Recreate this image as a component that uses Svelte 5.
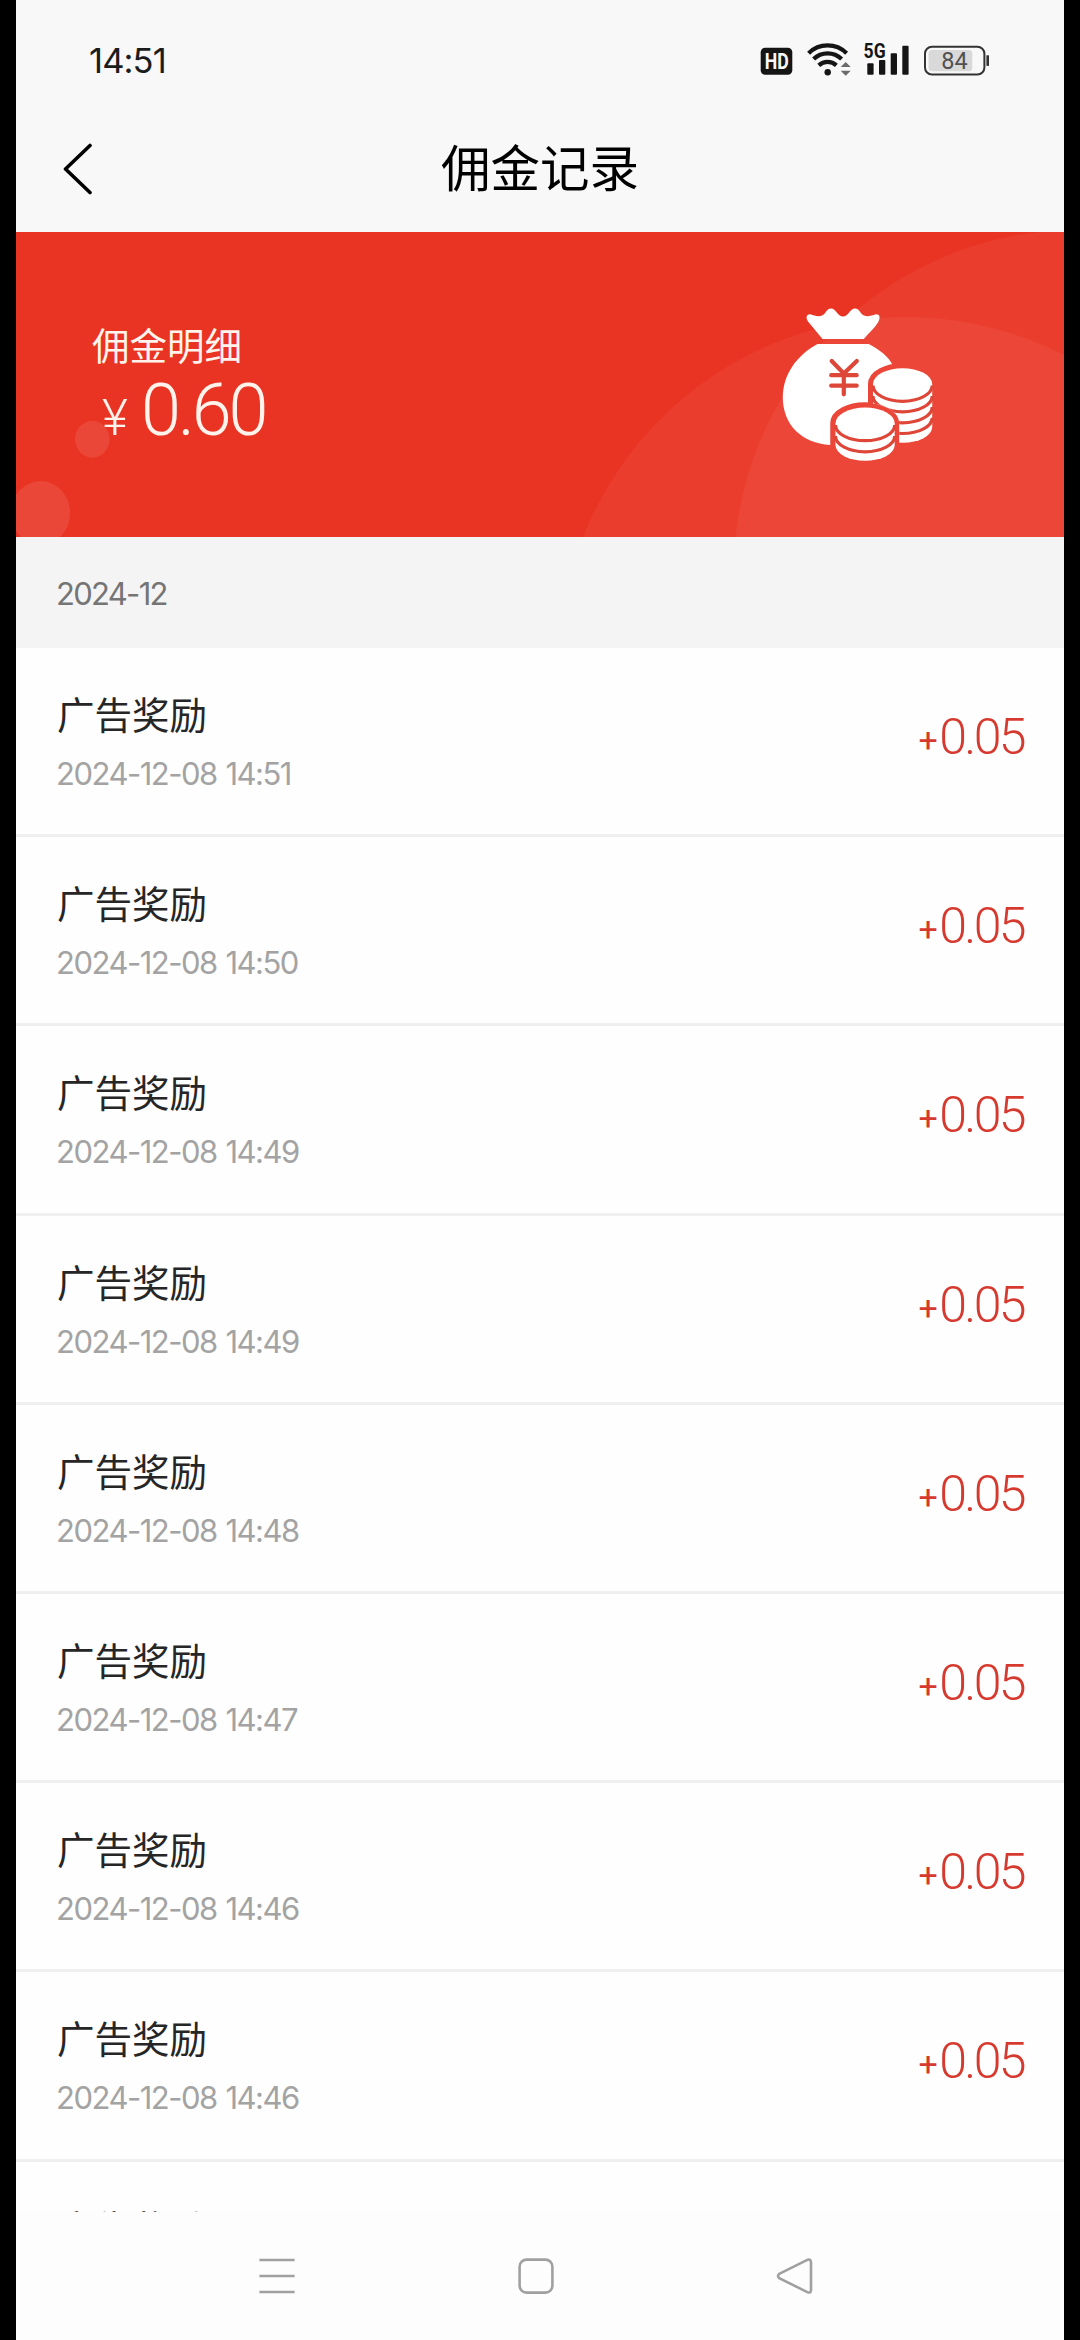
<script>
  const records = ['14:51', '14:50', '14:49', '14:49', '14:48', '14:47', '14:46', '14:46'].map((time) => ({
    title: '广告奖励',
    date: `2024-12-08 ${time}`,
    value: '0.05'
  }));
</script>

<div class="screen">
  <header class="status">
    <span class="clock">14:51</span>
    <svg class="status-icons" viewBox="755 40 240 40" width="240" height="40">
      <rect x="760.7" y="47.7" width="31.6" height="27" rx="4.5" fill="#151515" />
      <text class="hd" x="764.8" y="69" textLength="24" lengthAdjust="spacingAndGlyphs">HD</text>
      <g fill="none" stroke="#151515" stroke-width="4.2">
        <path d="M808.6 53.2A27 27 0 0 1 846.6 53.2" />
        <path d="M813.6 59A20 20 0 0 1 841.6 59" />
        <path d="M818.8 65.4A13 13 0 0 1 836.4 65.4" />
      </g>
      <circle cx="827.7" cy="72.2" r="3.2" fill="#151515" />
      <path d="M840.7 67L845.7 62L850.7 67ZM840.7 70.7L845.7 75.7L850.7 70.7Z" fill="#6a6a6a" />
      <g fill="#151515">
        <rect x="867.3" y="63.3" width="6.3" height="11.4" rx="1" />
        <rect x="879" y="60" width="6.3" height="14.7" rx="1" />
        <rect x="890.7" y="53.3" width="6.3" height="21.4" rx="1" />
        <rect x="902.3" y="45.7" width="6.3" height="29" rx="1" />
      </g>
      <text class="net" x="863.6" y="58" textLength="22" lengthAdjust="spacingAndGlyphs">5G</text>
      <rect x="925" y="46.7" width="59.4" height="27.8" rx="7" fill="none" stroke="#333" stroke-width="2" />
      <rect x="928.5" y="50" width="43.8" height="21.2" rx="3.5" fill="#d9d9d9" />
      <rect x="986.4" y="55.3" width="2.6" height="10.6" fill="#333" />
      <text class="level" x="941.3" y="69.2">84</text>
    </svg>
  </header>

  <div class="navbar">
    <svg class="back" viewBox="0 0 30 52" width="30" height="52">
      <path d="M27 2.5L2.5 26L27 49.5" fill="none" stroke="#000" stroke-width="3.6" stroke-linecap="round" stroke-linejoin="round" />
    </svg>
    <h1>佣金记录</h1>
    <span class="side"></span>
  </div>

  <section class="banner">
    <svg class="art" viewBox="16 232 1048 305" width="1048" height="305">
      <defs>
        <path id="rear" d="M873 384A29.6 15.8 0 0 1 932.2 384V427A29.6 15.8 0 0 1 873 427Z" />
        <path id="front" d="M835.5 423.3A29.6 15.8 0 0 1 894.7 423.3V445A29.6 15.8 0 0 1 835.5 445Z" />
        <mask id="bag-mask" maskUnits="userSpaceOnUse" x="770" y="300" width="180" height="170">
          <rect x="770" y="300" width="180" height="170" fill="#fff" />
          <use href="#rear" stroke="#000" stroke-width="10" />
          <use href="#front" stroke="#000" stroke-width="10.5" />
        </mask>
        <mask id="rear-mask" maskUnits="userSpaceOnUse" x="770" y="300" width="180" height="170">
          <rect x="770" y="300" width="180" height="170" fill="#fff" />
          <use href="#front" stroke="#000" stroke-width="9" />
        </mask>
      </defs>
      <g fill="#fff">
        <circle cx="906" cy="664" r="347" opacity="0.05" />
        <circle cx="1077" cy="573.5" r="343.5" opacity="0.05" />
        <ellipse cx="92.3" cy="439.3" rx="17.2" ry="18.4" opacity="0.1" />
        <ellipse cx="40.6" cy="513" rx="29.5" ry="32" opacity="0.1" />
        <path d="M822.5 339L808 321.5C805.5 317.5 806.5 314 810.5 314.3C814 315.5 818.5 317 822 315.5C826 313.5 826.5 308.4 831 308.4C836 308.4 837.5 316.5 843 316.5C848.5 316.5 850 308.4 855 308.4C859.5 308.4 860 313.5 864 315.5C867.5 317 872 315.5 875.8 314.3C879.8 314 880.8 317.5 878 322.5C874.5 328.5 868.5 333 863.8 339Z" />
        <path mask="url(#bag-mask)" d="M817.5 344H868.7C878.5 349 889 356.5 893 366V445H830C802 443 782.8 425.5 782.8 397C782.8 374.5 797 355 817.5 344Z" />
        <use href="#rear" mask="url(#rear-mask)" />
        <use href="#front" />
      </g>
      <g fill="none" stroke="#de4638" stroke-width="3.2">
        <g mask="url(#rear-mask)">
          <path d="M873 385.5A29.6 15.8 0 0 0 932.2 385.5" />
          <path d="M873 396A29.6 15.8 0 0 0 932.2 396" />
          <path d="M873 407A29.6 15.8 0 0 0 932.2 407" />
          <path d="M873 417.7A29.6 15.8 0 0 0 932.2 417.7" />
        </g>
        <path d="M835.5 424.9A29.6 15.8 0 0 0 894.7 424.9" />
        <path d="M835.5 436A29.6 15.8 0 0 0 894.7 436" />
        <path stroke-width="4.2" stroke-linecap="round" d="M831.7 361L843.8 373.5L856.8 361M843.8 373.5V394.3M831.2 375.2H856.7M831.2 385.7H856.7" />
      </g>
    </svg>
    <div class="summary">
      <div class="label">佣金明细</div>
      <div class="total"><span class="yen">¥</span><span>0.60</span></div>
    </div>
  </section>

  <div class="month">2024-12</div>

  <main>
    {#each records as r}
      <article>
        <div class="info">
          <div class="title">{r.title}</div>
          <div class="date">{r.date}</div>
        </div>
        <div class="amount"><span class="plus">+</span><span>{r.value}</span></div>
      </article>
    {/each}
    <article>
      <div class="title">广告奖励</div>
    </article>
  </main>

  <footer>
    <svg viewBox="0 0 40 40" width="40" height="40"><path d="M2.4 4H37.6M2.4 20H37.6M2.4 36H37.6" /></svg>
    <svg viewBox="0 0 40 40" width="40" height="40"><rect x="3.6" y="3.6" width="32.8" height="33" rx="7" /></svg>
    <svg viewBox="0 0 40 40" width="40" height="40"><path d="M4.2 17.9L32.3 3.9Q36 2.6 36 6.5V34Q36 37.6 32.3 36.1L4.2 22.1Q1.8 20 4.2 17.9Z" /></svg>
  </footer>
</div>

<style>
  :global(body) {
    margin: 0;
    background: #000;
  }

  .screen {
    box-sizing: border-box;
    width: 1080px;
    height: 2340px;
    padding: 0 16px;
    background: #000;
    display: flex;
    flex-direction: column;
    overflow: hidden;
    font-family: Inter, 'Noto Sans CJK SC', sans-serif;
  }

  .status {
    height: 120px;
    flex: none;
    box-sizing: border-box;
    padding: 0 69px 0 73px;
    background: #f8f8f8;
    display: flex;
    align-items: center;
    justify-content: space-between;
  }

  .clock {
    padding-top: 2px;
    font-size: 34.5px;
    line-height: 40px;
    letter-spacing: -0.9px;
    color: #1c1c1c;
  }

  .status-icons {
    display: block;
  }

  .hd {
    font: 700 22px Roboto, sans-serif;
    fill: #f8f8f8;
  }

  .net {
    font: 700 19.5px Roboto, sans-serif;
    fill: #151515;
    stroke: #f8f8f8;
    stroke-width: 2px;
    paint-order: stroke;
  }

  .level {
    font: 400 23.5px Roboto, sans-serif;
    fill: #505050;
  }

  .navbar {
    height: 112px;
    flex: none;
    box-sizing: border-box;
    padding: 0 47px 14px;
    background: #f8f8f8;
    display: flex;
    align-items: center;
    justify-content: space-between;
  }

  .side {
    width: 30px;
  }

  h1 {
    margin: 0;
    padding-bottom: 6px;
    font: 400 49.5px/60px 'Noto Sans CJK SC', sans-serif;
    color: #000;
  }

  .banner {
    height: 305px;
    flex: none;
    background: #e93323;
    position: relative;
    overflow: hidden;
  }

  .art {
    position: absolute;
    inset: 0;
  }

  .summary {
    position: relative;
    padding: 87px 0 0 76px;
    color: #fff3ec;
  }

  .label {
    font: 400 37.5px/50px 'Noto Sans CJK SC', sans-serif;
  }

  .total {
    display: flex;
    align-items: baseline;
    padding-left: 10px;
    margin-top: 2px;
    font: 350 72px/80px Roboto, sans-serif;
    letter-spacing: -3.2px;
  }

  .yen {
    width: 39px;
    font-size: 50px;
    letter-spacing: 0;
  }

  .month {
    height: 111px;
    flex: none;
    box-sizing: border-box;
    padding: 37px 40px 0;
    background: #f4f4f4;
    font-size: 31px;
    line-height: 40px;
    letter-spacing: -1.7px;
    color: #757575;
  }

  main {
    height: 1564px;
    flex: none;
    overflow: hidden;
    background: #fefefe;
  }

  article {
    box-sizing: border-box;
    height: 189.2px;
    padding: 40px 40px 0 41px;
    border-bottom: 3px solid #efefef;
    display: flex;
    justify-content: space-between;
    align-items: flex-start;
  }

  .title {
    font: 400 37.5px/50px 'Noto Sans CJK SC', sans-serif;
    color: #262626;
  }

  .date {
    margin-top: 16px;
    margin-left: -1px;
    font-size: 31px;
    line-height: 40px;
    letter-spacing: -1.5px;
    word-spacing: 1.5px;
    color: #a3a3a3;
  }

  .amount {
    display: flex;
    align-items: baseline;
    margin-top: 19px;
    font: 350 50px/60px Roboto, sans-serif;
    letter-spacing: -2.6px;
    color: #d63a2f;
  }

  .plus {
    position: relative;
    top: -2px;
    font-size: 34px;
    font-weight: 400;
    margin-right: 4px;
  }

  footer {
    flex: 1;
    box-sizing: border-box;
    padding: 44px 249px 0 241px;
    background: #fdfdfd;
    display: flex;
    justify-content: space-between;
  }

  footer svg {
    display: block;
    fill: none;
    stroke: #a0a0a0;
    stroke-width: 2.6px;
  }
</style>
